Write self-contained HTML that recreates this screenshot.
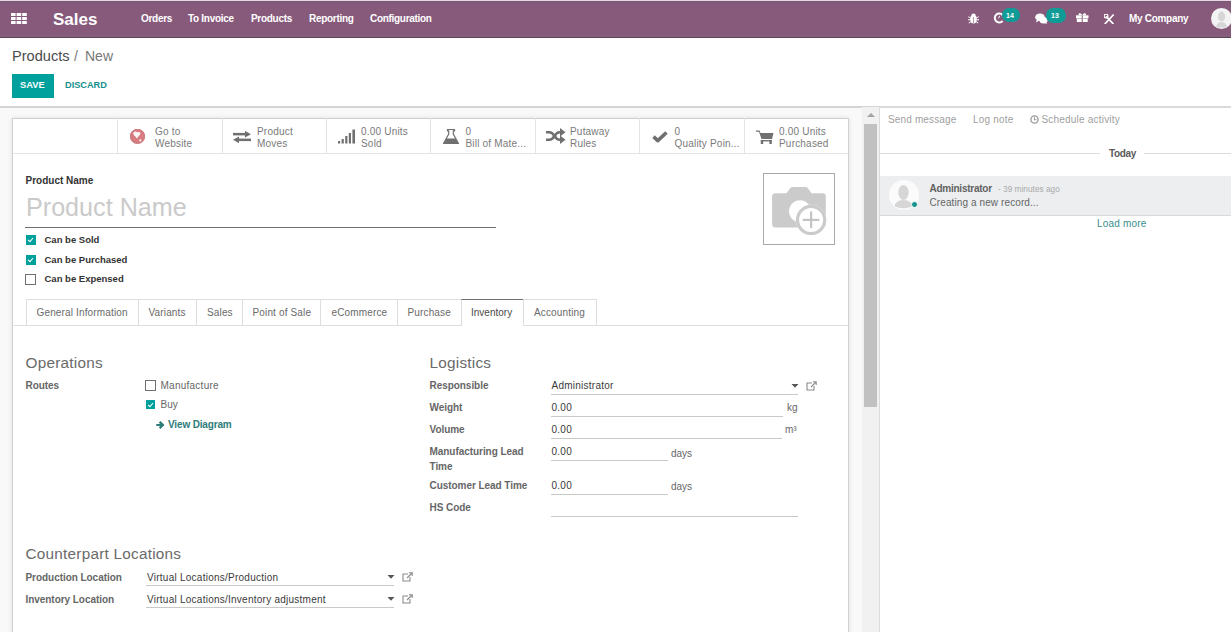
<!DOCTYPE html>
<html><head><meta charset="utf-8">
<style>
*{margin:0;padding:0;box-sizing:border-box}
html,body{width:1231px;height:632px;overflow:hidden;background:#fff;font-family:"Liberation Sans",sans-serif;position:relative}
.a{position:absolute}
.t{position:absolute;white-space:nowrap;line-height:1;font-size:10px}
.b{font-weight:bold}
.nv{color:#fff;font-weight:bold;font-size:10px;letter-spacing:-0.3px}
.bx{color:#7a7a7a;font-size:10px;letter-spacing:0.2px}
.bx.b{font-weight:normal;color:#7a7a7a}
.lb{color:#666;font-weight:bold;font-size:10px;letter-spacing:-0.05px}
.vv{color:#3a3a3a;font-size:10px;letter-spacing:0.25px}
.ul{position:absolute;height:1px;background:#c9c9c9}
.tab{position:absolute;top:299px;height:27px;border:1px solid #dedede;border-bottom:none;border-right:none}
.tt{color:#6a6a6a;letter-spacing:0.15px}
.h2{color:#6a6a6a;font-size:15.3px;letter-spacing:0.25px}
.cbc{position:absolute;width:10px;height:10px;background:#00A09D}
.cbc:after{content:"";position:absolute;left:3.2px;top:2px;width:2.2px;height:4px;border:solid #fff;border-width:0 1.2px 1.2px 0;transform:rotate(40deg)}
.cbu{position:absolute;width:11px;height:11px;border:1.4px solid #6f6f6f;background:#fff}
.sep{position:absolute;top:118px;width:1px;height:35px;background:#e3e3e3}
</style></head><body>

<!-- ============ NAVBAR ============ -->
<div class="a" style="left:0;top:0;width:1231px;height:1px;background:#e8d5e8"></div>
<div class="a" style="left:0;top:1px;width:1231px;height:37px;background:#875A7B"></div>
<div class="a" style="left:0;top:1px;width:1231px;height:1px;background:#77576f"></div><div class="a" style="left:0;top:3px;width:1231px;height:1px;background:#80587a"></div>
<div class="a" style="left:0;top:35px;width:1231px;height:2px;background:#84607b"></div><div class="a" style="left:0;top:37px;width:1231px;height:1px;background:#5f4458"></div>
<svg class="a" style="left:11px;top:13px" width="16" height="11" viewBox="0 0 16 11">
<g fill="#fff"><rect x="0" y="0" width="4.6" height="3"/><rect x="5.6" y="0" width="4.6" height="3"/><rect x="11.2" y="0" width="4.6" height="3"/>
<rect x="0" y="4" width="4.6" height="3"/><rect x="5.6" y="4" width="4.6" height="3"/><rect x="11.2" y="4" width="4.6" height="3"/>
<rect x="0" y="8" width="4.6" height="3"/><rect x="5.6" y="8" width="4.6" height="3"/><rect x="11.2" y="8" width="4.6" height="3"/></g></svg>
<div class="t b" style="left:53px;top:10.5px;font-size:17px;color:#fff">Sales</div>
<div class="t nv" style="left:141px;top:13.6px">Orders</div>
<div class="t nv" style="left:188px;top:13.6px">To Invoice</div>
<div class="t nv" style="left:251px;top:13.6px">Products</div>
<div class="t nv" style="left:309px;top:13.6px">Reporting</div>
<div class="t nv" style="left:370px;top:13.6px">Configuration</div>

<!-- right icons -->
<svg class="a" style="left:967.5px;top:13px" width="11" height="11" viewBox="0 0 11 11">
<g fill="#fff"><ellipse cx="5.5" cy="6.3" rx="3.3" ry="4.2"/><ellipse cx="5.5" cy="2" rx="2.2" ry="1.6"/>
<path d="M0.3 3.2 L2.5 4.3 L2.5 5.2 L0.3 4.3Z M10.7 3.2 L8.5 4.3 L8.5 5.2 L10.7 4.3Z M0 6.2 H2.5 V7.2 H0Z M11 6.2 H8.5 V7.2 H11Z M0.5 10 L2.5 8.3 L3 9 L1.2 10.6Z M10.5 10 L8.5 8.3 L8 9 L9.8 10.6Z"/></g>
<rect x="5" y="4" width="1" height="6" fill="#b89aae"/></svg>
<svg class="a" style="left:992.5px;top:12px" width="12" height="12" viewBox="0 0 12 12">
<path d="M9.6 3.2 A4.4 4.4 0 1 0 9.6 8.8" fill="none" stroke="#fff" stroke-width="2"/>
<path d="M5.6 6.4 L6.6 3.8" stroke="#fff" stroke-width="1"/></svg>
<div class="a" style="left:1001.5px;top:8.3px;width:18.5px;height:13.5px;border-radius:7px;background:#0f9c97"></div>
<div class="t b" style="left:1006px;top:12.2px;font-size:7px;color:#fff">14</div>
<svg class="a" style="left:1035px;top:12.5px" width="13" height="11" viewBox="0 0 13 11">
<g fill="#fff"><ellipse cx="5" cy="4.2" rx="4.8" ry="3.7"/><path d="M2 6.5 L0.8 9.5 L4.5 7.5Z"/><ellipse cx="8.5" cy="7.2" rx="4" ry="3.2"/><path d="M10.5 9 L12.5 10.8 L8.5 10Z"/></g></svg>
<div class="a" style="left:1045.5px;top:8px;width:20px;height:14.5px;border-radius:7.25px;background:#0f9c97"></div>
<div class="t b" style="left:1051px;top:12.2px;font-size:7px;color:#fff">13</div>
<svg class="a" style="left:1076px;top:12.8px" width="12.5" height="9.5" viewBox="0 0 12.5 9.5">
<g fill="#fff"><rect x="0" y="2.3" width="12.5" height="3"/><rect x="0.8" y="5.6" width="10.9" height="3.9"/><path d="M6.25 2.3 C4.5 -0.8 1.8 0.2 2.8 2.3Z M6.25 2.3 C8 -0.8 10.7 0.2 9.7 2.3Z"/></g>
<rect x="5.6" y="2.3" width="1.3" height="7.2" fill="#9a7f92"/></svg>
<svg class="a" style="left:1103.5px;top:13.5px" width="10" height="10.5" viewBox="0 0 10 10.5">
<g stroke="#fff" stroke-width="1.7" stroke-linecap="round"><path d="M2.5 2.8 L9 9.6"/><path d="M9.2 1 L1.2 9.6"/></g>
<circle cx="2" cy="2" r="1.9" fill="none" stroke="#fff" stroke-width="1.2"/></svg>
<div class="t nv" style="left:1129px;top:13.6px">My Company</div>
<div class="a" style="left:1211px;top:7.5px;width:21px;height:21px;border-radius:50%;background:#f3f3f3"></div>
<svg class="a" style="left:1211px;top:7.5px" width="21" height="21" viewBox="0 0 21 21">
<g fill="#d6d6d6"><ellipse cx="10.5" cy="8.5" rx="3.6" ry="5"/><path d="M5 19.5 Q5.5 14 10.5 14 Q15.5 14 16 19.5Z"/></g></svg>

<!-- ============ CONTROL PANEL ============ -->
<div class="t" style="left:12px;top:48.5px;font-size:14.6px;color:#4c4c4c">Products</div>
<div class="t" style="left:74px;top:49px;font-size:14px;color:#777">/</div>
<div class="t" style="left:85px;top:49px;font-size:14px;color:#777">New</div>
<div class="a" style="left:12px;top:74px;width:42px;height:24px;background:#00A09D"></div>
<div class="t b" style="left:20px;top:80.8px;font-size:9.3px;color:#fff">SAVE</div>
<div class="t b" style="left:65px;top:80.8px;font-size:9.2px;color:#168f8c">DISCARD</div>
<div class="a" style="left:0;top:106px;width:879px;height:2px;background:#d4d4d4"></div>
<div class="a" style="left:879px;top:106px;width:352px;height:2px;background:#dadada"></div>

<!-- ============ FORM BG + SCROLLBAR ============ -->
<div class="a" style="left:0;top:108px;width:862px;height:524px;background:#f9f9f9"></div>
<div class="a" style="left:862px;top:107px;width:17px;height:525px;background:#f1f1f1"></div>
<div class="a" style="left:864px;top:124px;width:13px;height:283px;background:#c1c1c1"></div>
<div class="a" style="left:866.5px;top:113px;width:0;height:0;border-left:4px solid transparent;border-right:4px solid transparent;border-bottom:4px solid #a3a3a3"></div>

<!-- ============ SHEET ============ -->
<div class="a" style="left:12px;top:118px;width:837px;height:530px;background:#fff;border:1px solid #d0d0d0;box-shadow:0 0 5px rgba(0,0,0,0.10)"></div>
<!-- button box -->
<div class="a" style="left:13px;top:153px;width:835px;height:1px;background:#e3e3e3"></div>
<div class="sep" style="left:117px"></div>
<div class="sep" style="left:222px"></div>
<div class="sep" style="left:326px"></div>
<div class="sep" style="left:430px"></div>
<div class="sep" style="left:535px"></div>
<div class="sep" style="left:639px"></div>
<div class="sep" style="left:744px"></div>

<!-- globe -->
<svg class="a" style="left:130px;top:128.8px" width="15" height="15" viewBox="0 0 15 15">
<circle cx="7.5" cy="7.4" r="7.2" fill="#d77c80" stroke="#c4676c" stroke-width="0.8"/>
<path d="M3.5 3.2 Q5.5 2 7 3.3 Q8.5 2.5 10.3 3.6 Q11 5.5 9 6.8 Q7.8 7.5 7.3 9.5 Q6 9 5.5 7.5 Q4 6.8 3.4 5.2Z" fill="#fff" opacity="0.92"/>
<path d="M9.5 10.5 Q11 9.8 11.6 11 Q11 12.8 9.6 12.6 Q9 11.5 9.5 10.5Z" fill="#fff" opacity="0.9"/></svg>
<div class="t bx" style="left:155px;top:127.2px">Go to</div>
<div class="t bx" style="left:155px;top:138.5px">Website</div>
<!-- arrows -->
<svg class="a" style="left:233px;top:131px" width="18" height="12" viewBox="0 0 18 12">
<g fill="#707070"><rect x="0" y="1.9" width="13" height="2.5"/><path d="M12 -0.2 L18 3.15 L12 6.5Z"/><rect x="5" y="7.6" width="13" height="2.5"/><path d="M6 5.5 L0 8.85 L6 12.2Z"/></g></svg>
<div class="t bx" style="left:257px;top:127.2px">Product</div>
<div class="t bx" style="left:257px;top:138.5px">Moves</div>
<!-- signal -->
<svg class="a" style="left:338px;top:129px" width="18" height="15" viewBox="0 0 18 15">
<g fill="#707070"><rect x="0" y="12" width="2.2" height="2.5"/><rect x="3.6" y="10" width="2.2" height="4.5"/><rect x="7.2" y="7" width="2.2" height="7.5"/><rect x="10.8" y="4" width="2.2" height="10.5"/><rect x="14.4" y="0.5" width="2.6" height="14"/></g></svg>
<div class="t bx b" style="left:361px;top:127.2px">0.00 Units</div>
<div class="t bx" style="left:361px;top:138.5px">Sold</div>
<!-- flask -->
<svg class="a" style="left:443px;top:129px" width="16" height="15" viewBox="0 0 16 15">
<path d="M4.5 0.5 H11.5 V1.8 H10.3 V5 L15.5 14.5 H0.5 L5.7 5 V1.8 H4.5Z" fill="none" stroke="#707070" stroke-width="1.2"/>
<path d="M3.3 9.5 H12.7 L15.5 14.6 H0.5Z" fill="#707070"/></svg>
<div class="t bx b" style="left:465.5px;top:127.2px">0</div>
<div class="t bx" style="left:465.5px;top:138.5px">Bill of Mate...</div>
<!-- shuffle -->
<svg class="a" style="left:545.5px;top:128px" width="20" height="16" viewBox="0 0 20 16">
<g fill="none" stroke="#707070" stroke-width="2.6"><path d="M0 4.2 H3.5 C8.5 4.2 8.5 11.8 13.5 11.8 H15"/><path d="M0 11.8 H3.5 C8.5 11.8 8.5 4.2 13.5 4.2 H15"/></g>
<g fill="#707070"><path d="M14 0 L19.5 4.2 L14 8.4Z"/><path d="M14 7.6 L19.5 11.8 L14 16Z"/></g></svg>
<div class="t bx" style="left:570px;top:127.2px">Putaway</div>
<div class="t bx" style="left:570px;top:138.5px">Rules</div>
<!-- check -->
<svg class="a" style="left:652px;top:131px" width="16" height="12" viewBox="0 0 16 12">
<path d="M1.5 5.6 L5.8 9.6 L14.5 1.5" fill="none" stroke="#707070" stroke-width="3.6" stroke-linejoin="round"/></svg>
<div class="t bx b" style="left:674.5px;top:127.2px">0</div>
<div class="t bx" style="left:674.5px;top:138.5px">Quality Poin...</div>
<!-- cart -->
<svg class="a" style="left:756px;top:130px" width="18" height="14" viewBox="0 0 18 14">
<g fill="#707070"><path d="M0 0.5 H3.5 L4.5 3 H17.5 L16 9 H5.5 L3 1.8 H0Z"/><rect x="4.8" y="10" width="11" height="1.4"/><rect x="4.8" y="10" width="2.4" height="4"/><rect x="13.4" y="10" width="2.4" height="4"/></g></svg>
<div class="t bx b" style="left:779px;top:127.2px">0.00 Units</div>
<div class="t bx" style="left:779px;top:138.5px">Purchased</div>

<!-- product name -->
<div class="t b" style="left:25.5px;top:175.7px;color:#333">Product Name</div>
<div class="t" style="left:26px;top:194.5px;font-size:25.15px;color:#cacaca">Product Name</div>
<div class="a" style="left:25px;top:227px;width:471px;height:1px;background:#6f6f6f"></div>
<!-- image -->
<div class="a" style="left:763px;top:173px;width:72px;height:71.5px;border:1px solid #a9a9a9;background:#fff"></div>
<svg class="a" style="left:770px;top:185px" width="58" height="52" viewBox="0 0 58 52">
<path d="M16.5 8.3 L20.5 2.8 Q21.2 2 22.5 2 H35.5 Q36.8 2 37.5 2.8 L41.5 8.3 H52.5 Q55.8 8.3 55.8 11.6 V39 Q55.8 42.5 52.5 42.5 H5.4 Q2.1 42.5 2.1 39 V11.6 Q2.1 8.3 5.4 8.3Z" fill="#cbcbcb"/>
<circle cx="30" cy="26.3" r="11" fill="#fff"/>
<circle cx="41.1" cy="34.9" r="15.2" fill="#fff"/>
<circle cx="41.1" cy="34.9" r="13.6" fill="none" stroke="#cbcbcb" stroke-width="3.2"/>
<g fill="#c4c4c4"><rect x="40" y="26.5" width="2.2" height="16.5"/><rect x="32.8" y="33.8" width="16.6" height="2.2"/></g></svg>

<!-- checkboxes -->
<div class="cbc" style="left:25.5px;top:235px"></div>
<div class="t b" style="left:44.5px;top:234.7px;font-size:9.5px;color:#333">Can be Sold</div>
<div class="cbc" style="left:25.5px;top:254.5px"></div>
<div class="t b" style="left:44.5px;top:254.5px;font-size:9.5px;color:#333">Can be Purchased</div>
<div class="cbu" style="left:25px;top:273.7px"></div>
<div class="t b" style="left:44.5px;top:273.8px;font-size:9.5px;color:#333">Can be Expensed</div>

<!-- tabs -->
<div class="a" style="left:13px;top:325px;width:835px;height:1px;background:#dedede"></div>
<div class="tab" style="left:26px;width:113px"></div>
<div class="tab" style="left:138px;width:59px"></div>
<div class="tab" style="left:196px;width:47px"></div>
<div class="tab" style="left:242px;width:79px"></div>
<div class="tab" style="left:320px;width:78px"></div>
<div class="tab" style="left:397px;width:65px"></div>
<div class="a" style="left:461px;top:299px;width:63px;height:27px;background:#fff;border:1px solid #dedede;border-top:1px solid #6e6e6e;border-bottom:none"></div>
<div class="tab" style="left:523px;width:74px;border-right:1px solid #dedede"></div>
<div class="t tt" style="left:36.5px;top:308.3px">General Information</div>
<div class="t tt" style="left:148.5px;top:308.3px">Variants</div>
<div class="t tt" style="left:207px;top:308.3px">Sales</div>
<div class="t tt" style="left:252.5px;top:308.3px">Point of Sale</div>
<div class="t tt" style="left:331.5px;top:308.3px">eCommerce</div>
<div class="t tt" style="left:407.5px;top:308.3px">Purchase</div>
<div class="t" style="left:471px;top:308.3px;color:#4a4a4a">Inventory</div>
<div class="t tt" style="left:534px;top:308.3px">Accounting</div>

<!-- operations -->
<div class="t h2" style="left:25.5px;top:354.8px">Operations</div>
<div class="t lb" style="left:25.5px;top:381.4px">Routes</div>
<div class="cbu" style="left:145px;top:380.2px;width:10.8px;height:10.6px;border-width:1.6px"></div>
<div class="t" style="left:160.5px;top:381.4px;color:#666;letter-spacing:0.25px">Manufacture</div>
<div class="cbc" style="left:145.8px;top:400.2px;width:9px;height:8.8px"></div>
<div class="t" style="left:160.5px;top:400.1px;color:#666">Buy</div>
<svg class="a" style="left:156px;top:421px" width="9" height="8" viewBox="0 0 9 8">
<path d="M0.3 4 H6.5 M3.6 0.9 L6.9 4 L3.6 7.1" fill="none" stroke="#2b7b79" stroke-width="2.2"/></svg>
<div class="t b" style="left:168px;top:420.1px;color:#2d7c7a;letter-spacing:-0.15px">View Diagram</div>

<!-- logistics -->
<div class="t h2" style="left:429.5px;top:355.2px">Logistics</div>
<div class="t lb" style="left:429.5px;top:380.8px">Responsible</div>
<div class="t vv" style="left:551.5px;top:380.8px">Administrator</div>
<div class="ul" style="left:550.5px;top:394px;width:247px"></div>
<svg class="a" style="left:790.5px;top:383.5px" width="8" height="4" viewBox="0 0 8 4"><path d="M0.5 0 H7.5 L4 3.8Z" fill="#555"/></svg>
<svg class="a" style="left:806px;top:380.5px" width="11" height="10" viewBox="0 0 11 10">
<g fill="none" stroke="#8a8a8a" stroke-width="1.1"><path d="M6 2 H1 V9 H8 V5"/><path d="M5 6 L10 1 M7 0.8 H10.2 V4"/></g></svg>
<div class="t lb" style="left:429.5px;top:403px">Weight</div>
<div class="t vv" style="left:551.5px;top:403px">0.00</div>
<div class="ul" style="left:550.5px;top:416px;width:232px"></div>
<div class="t" style="left:787px;top:403px;color:#666">kg</div>
<div class="t lb" style="left:429.5px;top:425px">Volume</div>
<div class="t vv" style="left:551.5px;top:425px">0.00</div>
<div class="ul" style="left:550.5px;top:438px;width:231px"></div>
<div class="t" style="left:785px;top:425px;color:#666">m³</div>
<div class="t lb" style="left:429.5px;top:447.2px">Manufacturing Lead</div>
<div class="t lb" style="left:429.5px;top:461.8px">Time</div>
<div class="t vv" style="left:551.5px;top:447.2px">0.00</div>
<div class="ul" style="left:550.5px;top:460px;width:117px"></div>
<div class="t" style="left:671px;top:448.5px;color:#666">days</div>
<div class="t lb" style="left:429.5px;top:480.6px">Customer Lead Time</div>
<div class="t vv" style="left:551.5px;top:480.6px">0.00</div>
<div class="ul" style="left:550.5px;top:494px;width:117px"></div>
<div class="t" style="left:671px;top:482px;color:#666">days</div>
<div class="t lb" style="left:429.5px;top:502.5px">HS Code</div>
<div class="ul" style="left:550.5px;top:516px;width:247px"></div>

<!-- counterpart -->
<div class="t h2" style="left:25.5px;top:545.8px">Counterpart Locations</div>
<div class="t lb" style="left:25.5px;top:572.8px">Production Location</div>
<div class="t vv" style="left:147px;top:572.8px">Virtual Locations/Production</div>
<div class="ul" style="left:146px;top:585px;width:248px"></div>
<svg class="a" style="left:386.5px;top:575px" width="8" height="4" viewBox="0 0 8 4"><path d="M0.5 0 H7.5 L4 3.8Z" fill="#555"/></svg>
<svg class="a" style="left:402px;top:571.5px" width="11" height="10" viewBox="0 0 11 10">
<g fill="none" stroke="#8a8a8a" stroke-width="1.1"><path d="M6 2 H1 V9 H8 V5"/><path d="M5 6 L10 1 M7 0.8 H10.2 V4"/></g></svg>
<div class="t lb" style="left:25.5px;top:594.9px">Inventory Location</div>
<div class="t vv" style="left:147px;top:594.9px">Virtual Locations/Inventory adjustment</div>
<div class="ul" style="left:146px;top:607px;width:248px"></div>
<svg class="a" style="left:386.5px;top:597px" width="8" height="4" viewBox="0 0 8 4"><path d="M0.5 0 H7.5 L4 3.8Z" fill="#555"/></svg>
<svg class="a" style="left:402px;top:593.5px" width="11" height="10" viewBox="0 0 11 10">
<g fill="none" stroke="#8a8a8a" stroke-width="1.1"><path d="M6 2 H1 V9 H8 V5"/><path d="M5 6 L10 1 M7 0.8 H10.2 V4"/></g></svg>

<!-- ============ CHATTER ============ -->
<div class="a" style="left:879px;top:107px;width:1px;height:525px;background:#dcdcdc"></div>
<div class="t" style="left:888px;top:115px;color:#a0a0a0;letter-spacing:0.15px">Send message</div>
<div class="t" style="left:973px;top:115px;color:#a0a0a0;letter-spacing:0.2px">Log note</div>
<svg class="a" style="left:1030px;top:115px" width="9" height="9" viewBox="0 0 9 9">
<circle cx="4.5" cy="4.5" r="3.6" fill="none" stroke="#9c9c9c" stroke-width="1.4"/><path d="M4.5 2.2 V4.8 H6.4" fill="none" stroke="#9c9c9c" stroke-width="1.1"/></svg>
<div class="t" style="left:1041.5px;top:115px;color:#a0a0a0;letter-spacing:0.2px">Schedule activity</div>
<div class="a" style="left:880px;top:153px;width:220px;height:1px;background:#dcdcdc"></div>
<div class="a" style="left:1144px;top:153px;width:87px;height:1px;background:#dcdcdc"></div>
<div class="t b" style="left:1109px;top:148.7px;color:#5a5a5a;letter-spacing:-0.35px">Today</div>
<div class="a" style="left:880px;top:176px;width:351px;height:40px;background:#eceef0;border-bottom:1px solid #d9d9d9"></div>
<div class="a" style="left:889px;top:180px;width:29.5px;height:29.5px;border-radius:50%;background:#fbfbfb"></div>
<svg class="a" style="left:889px;top:180px" width="30" height="30" viewBox="0 0 30 30">
<g fill="#d6d6d6"><ellipse cx="14.5" cy="12.5" rx="5.2" ry="7.5"/><path d="M5.5 26.5 Q6.5 20 14.5 20 Q22.5 20 23.5 26.5 Q14.5 30 5.5 26.5Z"/></g></svg>
<div class="a" style="left:910.5px;top:200.5px;width:7px;height:7px;border-radius:50%;background:#14948e;border:1px solid #fff"></div>
<div class="t b" style="left:929.5px;top:183.5px;color:#626262;letter-spacing:-0.25px">Administrator</div>
<div class="t" style="left:998px;top:185.3px;font-size:8.3px;color:#aaa">- 39 minutes ago</div>
<div class="t" style="left:929.5px;top:197.5px;color:#666;letter-spacing:0.1px">Creating a new record...</div>
<div class="t" style="left:1097px;top:219.3px;color:#3a8e8b;letter-spacing:0.2px">Load more</div>
</body></html>
